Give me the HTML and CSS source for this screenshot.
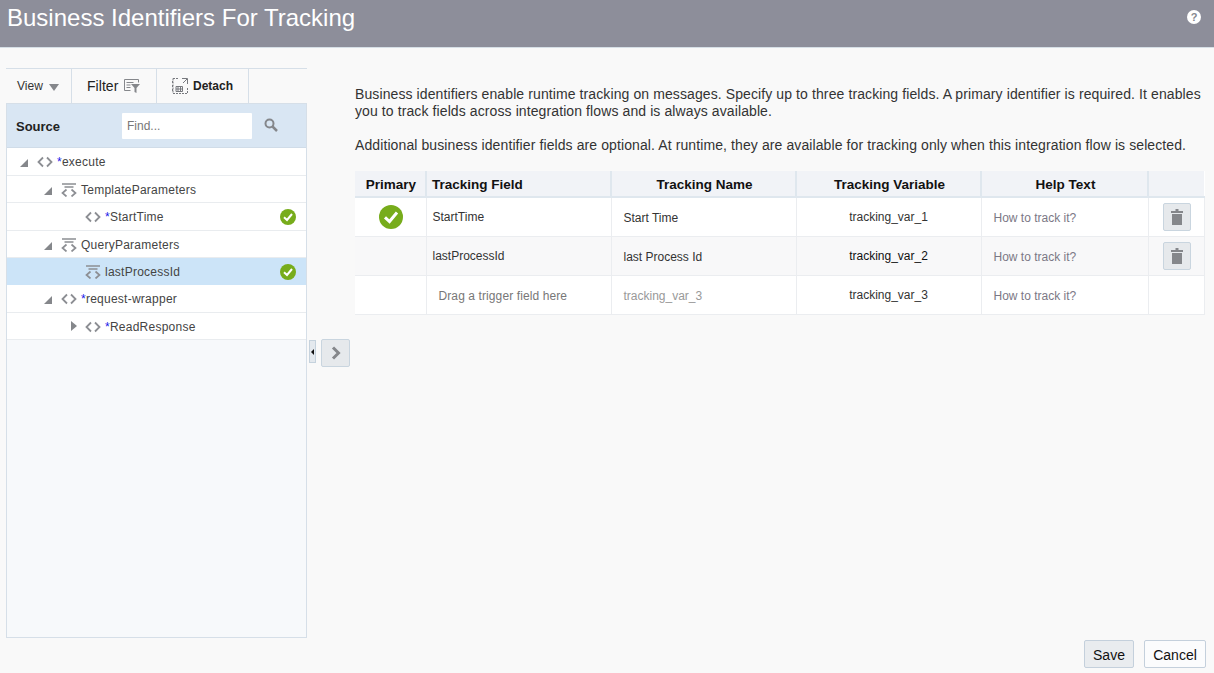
FILE: index.html
```html
<!DOCTYPE html>
<html lang="en">
<head>
<meta charset="utf-8">
<title>Business Identifiers For Tracking</title>
<link rel="stylesheet" href="styles.css">
</head>
<body>
<svg class="defs" width="0" height="0" aria-hidden="true">
  <defs>
    <symbol id="tag" viewBox="0 0 16 12"><path d="M6 1.500 1.500 6 6 10.500M10 1.500 14.500 6 10 10.500" fill="none" stroke="#8c8e93" stroke-width="1.800"/></symbol>
    <symbol id="param" viewBox="0 0 16 14"><path d="M1 1h14M3.500 4h9" stroke="#8c8e93" stroke-width="1.500" fill="none"/><path d="M5.500 6.500 1.500 10l4 3.500M10.500 6.500l4 3.500-4 3.500" fill="none" stroke="#8c8e93" stroke-width="1.700"/></symbol>
    <symbol id="ok" viewBox="0 0 16 16"><circle cx="8" cy="8" r="8" fill="#77ac1b"/><path d="M4 8.300 7 11l5-6" fill="none" stroke="#fff" stroke-width="2"/></symbol>
    <symbol id="trash" viewBox="0 0 14 16"><path d="M5.500 0h3v2H13v2H1V2h4.500zM2 5h10v11H2z" fill="#85878b"/></symbol>
  </defs>
</svg>
<header class="page-head">
  <h1>Business Identifiers For Tracking</h1>
  <span class="help">?</span>
</header>
<main class="layout">
  <section class="left">
    <div class="toolbar">
      <div class="tool tool-view">View <span class="caret"></span></div>
      <div class="tool tool-filter">Filter
        <svg width="16" height="16" viewBox="0 0 16 16"><path d="M.5 1.500h14M.5 1.500v11h6M14.500 1.500v3M2.500 4.500h7M2.500 7h4M2.500 9.500h4" stroke="#85878b" fill="none"/><path d="M7 6h9l-3.500 4v5l-2-1v-4z" fill="#85878b"/></svg>
      </div>
      <div class="tool tool-detach">
        <svg width="16" height="16" viewBox="0 0 16 16"><path d="M1 .5H7M1 .5V15.500H15.500V9M.5 3v2M.5 7v2M.5 11v2" stroke="#77797e" stroke-dasharray="2 1" fill="none"/><path d="M10 .5h5.500V6M15 1l-4 4" stroke="#77797e" fill="none"/><path d="M4 8.500h6.500v5H4zM4 11h6.500M6 8.500v5M8.500 8.500v5" stroke="#77797e" fill="none"/></svg>
        <b>Detach</b>
      </div>
    </div>
    <div class="panel">
      <div class="panel-head">
        <b class="panel-title">Source</b>
        <input class="find" type="text" placeholder="Find...">
        <svg class="search" width="14" height="14" viewBox="0 0 14 14"><circle cx="5.500" cy="5.500" r="4" fill="none" stroke="#85878b" stroke-width="2"/><path d="m8.500 8.500 4.500 4.500" stroke="#85878b" stroke-width="2.500"/></svg>
      </div>
      <ul class="tree">
        <li class="node tall lv0"><span class="arrow open"></span><svg class="ni"><use href="#tag"/></svg><span class="lbl"><i>*</i>execute</span></li>
        <li class="node lv1"><span class="arrow open"></span><svg class="ni"><use href="#param"/></svg><span class="lbl">TemplateParameters</span></li>
        <li class="node tall lv2"><span class="arrow none"></span><svg class="ni"><use href="#tag"/></svg><span class="lbl"><i>*</i>StartTime</span><svg class="ok"><use href="#ok"/></svg></li>
        <li class="node lv1"><span class="arrow open"></span><svg class="ni"><use href="#param"/></svg><span class="lbl">QueryParameters</span></li>
        <li class="node lv2 sel"><span class="arrow none"></span><svg class="ni"><use href="#param"/></svg><span class="lbl">lastProcessId</span><svg class="ok"><use href="#ok"/></svg></li>
        <li class="node tall lv1"><span class="arrow open"></span><svg class="ni"><use href="#tag"/></svg><span class="lbl"><i>*</i>request-wrapper</span></li>
        <li class="node lv2"><span class="arrow closed"></span><svg class="ni"><use href="#tag"/></svg><span class="lbl"><i>*</i>ReadResponse</span></li>
      </ul>
    </div>
  </section>
  <div class="splitter"><span class="split-handle"></span></div>
  <div class="move"><button class="move-btn" type="button"><svg width="12" height="14" viewBox="0 0 12 14"><path d="M3 1.500 8.500 7 3 12.500" fill="none" stroke="#85878b" stroke-width="3"/></svg></button></div>
  <section class="right">
    <p class="intro">Business identifiers enable runtime tracking on messages. Specify up to three tracking fields. A primary identifier is required. It enables you to track fields across integration flows and is always available.</p>
    <p class="intro second">Additional business identifier fields are optional. At runtime, they are available for tracking only when this integration flow is selected.</p>
    <table class="grid">
      <colgroup><col class="c1"><col class="c2"><col class="c3"><col class="c4"><col class="c5"><col class="c6"></colgroup>
      <thead>
        <tr><th>Primary</th><th class="left-h">Tracking Field</th><th>Tracking Name</th><th>Tracking Variable</th><th>Help Text</th><th></th></tr>
      </thead>
      <tbody>
        <tr>
          <td class="ctr icon-primary"><svg class="ok-big"><use href="#ok"/></svg></td>
          <td><span class="up">StartTime</span></td><td class="name">Start Time</td><td class="ctr"><span class="up">tracking_var_1</span></td><td class="hint">How to track it?</td>
          <td class="ctr icon-del"><button class="del" type="button"><svg width="14" height="16"><use href="#trash"/></svg></button></td>
        </tr>
        <tr class="alt">
          <td></td>
          <td><span class="up">lastProcessId</span></td><td class="name">last Process Id</td><td class="ctr dark"><span class="up">tracking_var_2</span></td><td class="hint">How to track it?</td>
          <td class="ctr icon-del"><button class="del" type="button"><svg width="14" height="16"><use href="#trash"/></svg></button></td>
        </tr>
        <tr>
          <td></td>
          <td class="drag">Drag a trigger field here</td><td class="name muted">tracking_var_3</td><td class="ctr"><span class="up">tracking_var_3</span></td><td class="hint">How to track it?</td>
          <td></td>
        </tr>
      </tbody>
    </table>
    <div class="actions">
      <button class="btn save" type="button">Save</button>
      <button class="btn cancel" type="button">Cancel</button>
    </div>
  </section>
</main>
</body>
</html>
```

FILE: styles.css
```css
* { box-sizing: border-box; }
html, body { height: 100%; }
body {
  margin: 0;
  height: 673px;
  overflow: hidden;
  background: #f9f9f9;
  color: #333;
  font-family: "Liberation Sans", Arial, sans-serif;
  font-size: 12px;
  display: flex;
  flex-direction: column;
}
.defs { position: absolute; }
.page-head {
  height: 48px;
  flex: none;
  background: #8d8e9a;
  border-bottom: 1px solid #d6dfe6;
  display: flex;
  justify-content: space-between;
  padding: 4px 13px 0 7px;
}
.page-head h1 { margin: 0; font-size: 24px; line-height: 27px; font-weight: 400; color: #fff; }
.help {
  width: 14px; height: 14px; margin-top: 6px; border-radius: 50%;
  background: #fff; color: #85878f; font-size: 11px; font-weight: 700;
  line-height: 14px; text-align: center;
}
.layout { flex: 1; display: flex; min-height: 0; padding: 20px 8px 0 6px; }
.left { width: 301px; flex: none; display: flex; flex-direction: column; height: 570px; }
.toolbar {
  height: 35px; flex: none; display: flex;
  border-top: 1px solid #d6dfe8;
}
.tool {
  display: flex; align-items: center; border-right: 1px solid #d6dfe8; color: #333; height: 34px;
}
.tool-view { width: 66px; padding-left: 11px; font-size: 12px; }
.caret { margin-left: 6px; margin-top: 3px; border: 5px solid transparent; border-top: 7px solid #85878b; border-bottom: 0; }
.tool-filter { width: 85px; padding-left: 15px; font-size: 14px; gap: 5px; color: #222; padding-bottom: 1px; letter-spacing: .05px; }
.tool-filter svg { margin-left: 1px; }
.tool-detach { width: 92px; padding-left: 15px; gap: 5px; color: #222; padding-bottom: 1px; }
.panel {
  flex: 1; display: flex; flex-direction: column;
  border: 1px solid #d6dfe8; background: #f7f9fb;
}
.panel-head {
  height: 44px; flex: none; background: #d9e6f3; border-bottom: 1px solid #d0dce8;
  display: flex; align-items: center; padding-left: 9px;
}
.panel-title { width: 106px; font-size: 13px; color: #222; margin-top: 2px; }
.find {
  width: 130px; height: 26px; border: 0; padding: 0 5px; background: #fff;
  font: 12px "Liberation Sans", Arial, sans-serif; border-radius: 1px;
}
.find::placeholder { color: #777; opacity: 1; }
.search { margin-left: 12px; margin-top: -1px; }
.tree { list-style: none; margin: 0; padding: 0; }
.node {
  height: 27px; padding-top: 2px; display: flex; align-items: center;
  background: #fff; border-bottom: 1px solid #e9ecef; color: #444;
  position: relative; letter-spacing: .25px;
}
.node.tall { height: 28px; padding-bottom: 1px; }
.node.sel { background: #cce4f8; border-bottom-color: #cce4f8; }
.lv0 { padding-left: 12px; }
.lv1 { padding-left: 36px; }
.lv2 { padding-left: 60px; }
.arrow { width: 13px; height: 10px; flex: none; margin-right: 5px; position: relative; }
.arrow.open::before {
  content: ""; position: absolute; left: 1px; top: 2px;
  border-style: solid; border-width: 0 0 8px 8px;
  border-color: transparent transparent #85878b transparent;
}
.arrow.closed::before {
  content: ""; position: absolute; left: 4px; top: -1px;
  border-style: solid; border-width: 5px 0 5px 6px;
  border-color: transparent transparent transparent #85878b;
}
.ni { width: 16px; height: 14px; flex: none; margin-right: 4px; }
.lbl i { color: #1a1ae8; font-style: normal; }
.ok { width: 16px; height: 16px; position: absolute; right: 10px; top: 6px; }
.splitter { width: 14px; flex: none; padding: 272px 0 0 2px; }
.split-handle {
  display: block; width: 7px; height: 23px; background: #e4e9ee;
  border: 1px solid #c5d2dd; position: relative;
}
.split-handle::after {
  content: ""; position: absolute; left: 1px; top: 8px;
  border-style: solid; border-width: 3px 3px 3px 0;
  border-color: transparent #111 transparent transparent;
}
.move { width: 34px; flex: none; padding-top: 271px; }
.move-btn {
  width: 29px; height: 28px; padding: 0; background: #e6e9ec;
  border: 1px solid #c9d5df; border-radius: 2px;
  display: flex; align-items: center; justify-content: center;
}
.right { flex: 1; min-width: 0; padding-top: 18px; display: flex; flex-direction: column; height: 600px; }
.intro { margin: 0; font-size: 14px; line-height: 17px; color: #333; letter-spacing: .1px; }
.second { margin-top: 17px; }
.grid {
  margin-top: 17px; width: 849px; table-layout: fixed; border-collapse: collapse;
  background: #fff; font-size: 12px;
}
.c1 { width: 71px; } .c2 { width: 185px; } .c3 { width: 185px; }
.c4 { width: 185px; } .c5 { width: 167px; } .c6 { width: 56px; }
.grid th {
  height: 26px; background: #f1f3f7; color: #111; font-size: 13.500px; font-weight: 700;
  border-right: 2px solid #dfe7ee; border-bottom: 2px solid #dfe7ee; padding: 2px 0 0 2px;
  text-align: center;
}
.grid th:last-child { border-right: 0; }
.grid th.left-h { text-align: left; padding-left: 5px; }
.grid td {
  height: 39px; padding: 2px 5px 0 6px; border-right: 1px solid #ebedf0; border-bottom: 1px solid #ebedf0;
  color: #333; vertical-align: middle;
}
.grid td.ctr { padding-left: 5px; }
.grid td.icon-primary { padding: 0 4px 0 6px; }
.grid td.icon-del { padding: 0 0 0 2px; }
.alt td { background: #f8f8f9; }
.ctr { text-align: center; }
.up { position: relative; top: -1px; }
.dark { color: #111 !important; }
.grid .name { padding-left: 12px; }
.grid .muted { color: #999; }
.grid .hint { padding-left: 12px; color: #7b7885; }
.grid .drag { padding-left: 12px; color: #777; letter-spacing: .1px; }
.ok-big { width: 24px; height: 24px; display: block; margin: 0 auto; }
.del {
  width: 28px; height: 28px; padding: 0; background: #e6e9ec; border: 1px solid #c9d5df;
  border-radius: 2px; display: inline-flex; align-items: center; justify-content: center;
  vertical-align: middle;
}
.actions { margin-top: auto; display: flex; justify-content: flex-end; gap: 10px; }
.btn {
  height: 28px; border: 1px solid #c4d0dc; border-radius: 2px; color: #111;
  font: 14px "Liberation Sans", Arial, sans-serif; padding: 2px 0 0;
}
.save { width: 50px; background: #e9ecef; }
.cancel { width: 62px; background: #fbfcfd; }
```
